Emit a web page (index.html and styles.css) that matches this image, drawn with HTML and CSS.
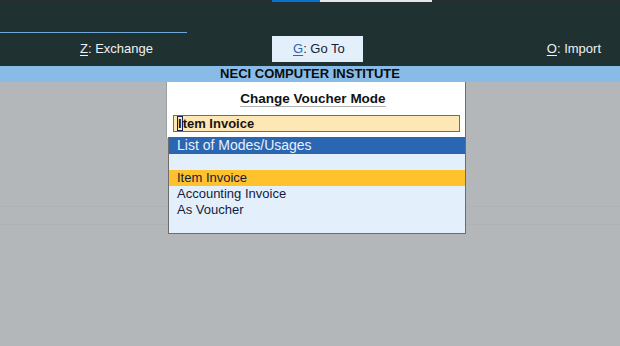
FILE: index.html
```html
<!DOCTYPE html>
<html lang="en">
<head>
    <meta charset="UTF-8">
    <title>Change Voucher Mode</title>
    <link rel="stylesheet" href="styles.css">
</head>
<body>
    <div class="top-strip">
        <div class="strip-dark"></div>
        <div class="strip-blue"></div>
        <div class="strip-light"></div>
    </div>
    <div class="header">
        <div class="header-line"></div>
        <div class="toolbar">
            <div class="tool"><u>Z</u>:&nbsp;Exchange</div>
            <div class="tool tool-active"><u>G</u>:&nbsp;Go To</div>
            <div class="tool tool-right"><u>O</u>:&nbsp;Import</div>
        </div>
    </div>
    <div class="company">NECI COMPUTER INSTITUTE</div>
    <div class="main">
        <div class="dialog">
            <div class="dialog-title"><span>Change Voucher Mode</span></div>
            <div class="dialog-input"><span class="cursor">I</span>tem Invoice</div>
        </div>
        <div class="list">
            <div class="list-head">List of Modes/Usages</div>
            <div class="list-row"></div>
            <div class="list-row selected">Item Invoice</div>
            <div class="list-row">Accounting Invoice</div>
            <div class="list-row">As Voucher</div>
        </div>
    </div>
</body>
</html>
```

FILE: styles.css
```css
body {
    margin: 0;
    width: 620px;
    height: 346px;
    overflow: hidden;
    font-family: 'Liberation Sans', Arial, sans-serif;
    font-size: 13px;
    background-color: #b4b7ba;
}
.top-strip {
    display: flex;
    height: 2px;
    background-color: #2a2b2c;
}
.strip-dark {
    width: 272px;
}
.strip-blue {
    width: 48px;
    background-color: #0b6fd1;
}
.strip-light {
    width: 112px;
    background-color: #e6e6e6;
}
.header {
    height: 64px;
    background-color: #203132;
    padding-top: 30px;
    box-sizing: border-box;
}
.header-line {
    width: 187px;
    height: 1px;
    background-color: #6fa9d9;
}
.toolbar {
    display: grid;
    grid-template-columns: 272px 91px 1fr;
    margin-top: 3px;
    height: 26px;
}
.tool {
    color: #eef2f4;
    line-height: 26px;
    padding-left: 80px;
}
.tool u {
    text-decoration-thickness: 1px;
    text-underline-offset: 2px;
}
.tool-active {
    background-color: #e3effb;
    color: #16232e;
    padding-left: 21px;
}
.tool-active u {
    color: #2a66b1;
}
.tool-right {
    text-align: right;
    padding-left: 0;
    padding-right: 19px;
}
.company {
    height: 16px;
    line-height: 16px;
    background-color: #88bce6;
    text-align: center;
    font-weight: bold;
    color: #0c0c0c;
}
.main {
    height: 264px;
    background-image:
        linear-gradient(#afb2b5, #afb2b5),
        linear-gradient(#b0b3b6, #b0b3b6);
    background-size: 100% 1px, 100% 1px;
    background-position: 0 124px, 0 142px;
    background-repeat: no-repeat;
}
.dialog {
    margin-left: 166px;
    width: 300px;
    height: 56px;
    box-sizing: border-box;
    background-color: #ffffff;
    border-left: 1px solid #9c9fa2;
    border-right: 1px solid #6e6e6e;
    padding-top: 9px;
}
.dialog-title {
    text-align: center;
    font-weight: bold;
    font-size: 13.5px;
    color: #111111;
    padding-right: 6px;
}
.dialog-title span {
    display: inline-block;
    line-height: 15px;
    border-bottom: 1px solid #b3b3b3;
}
.dialog-input {
    margin: 8px 0 0 6px;
    width: 287px;
    height: 17px;
    box-sizing: border-box;
    border: 1px solid #1f86c6;
    background-color: #fde7b5;
    font-weight: bold;
    color: #1a1410;
    line-height: 15px;
    padding-left: 3px;
}
.cursor {
    outline: 1px solid #15205a;
    outline-offset: -1px;
    padding: 0 1px 0 1px;
}
.list {
    margin: -1px 0 0 168px;
    width: 298px;
    box-sizing: border-box;
    border: 1px solid #6d6d6d;
    border-top: none;
    background-color: #e3effb;
    padding-bottom: 15px;
}
.list-head {
    height: 17px;
    line-height: 17px;
    background-color: #2a66b1;
    color: #e9f1fb;
    font-size: 14px;
    padding-left: 8px;
}
.list-row {
    height: 16px;
    line-height: 16px;
    padding-left: 8px;
    color: #141a3c;
}
.list-row.selected {
    background-color: #fdc22e;
}
```
